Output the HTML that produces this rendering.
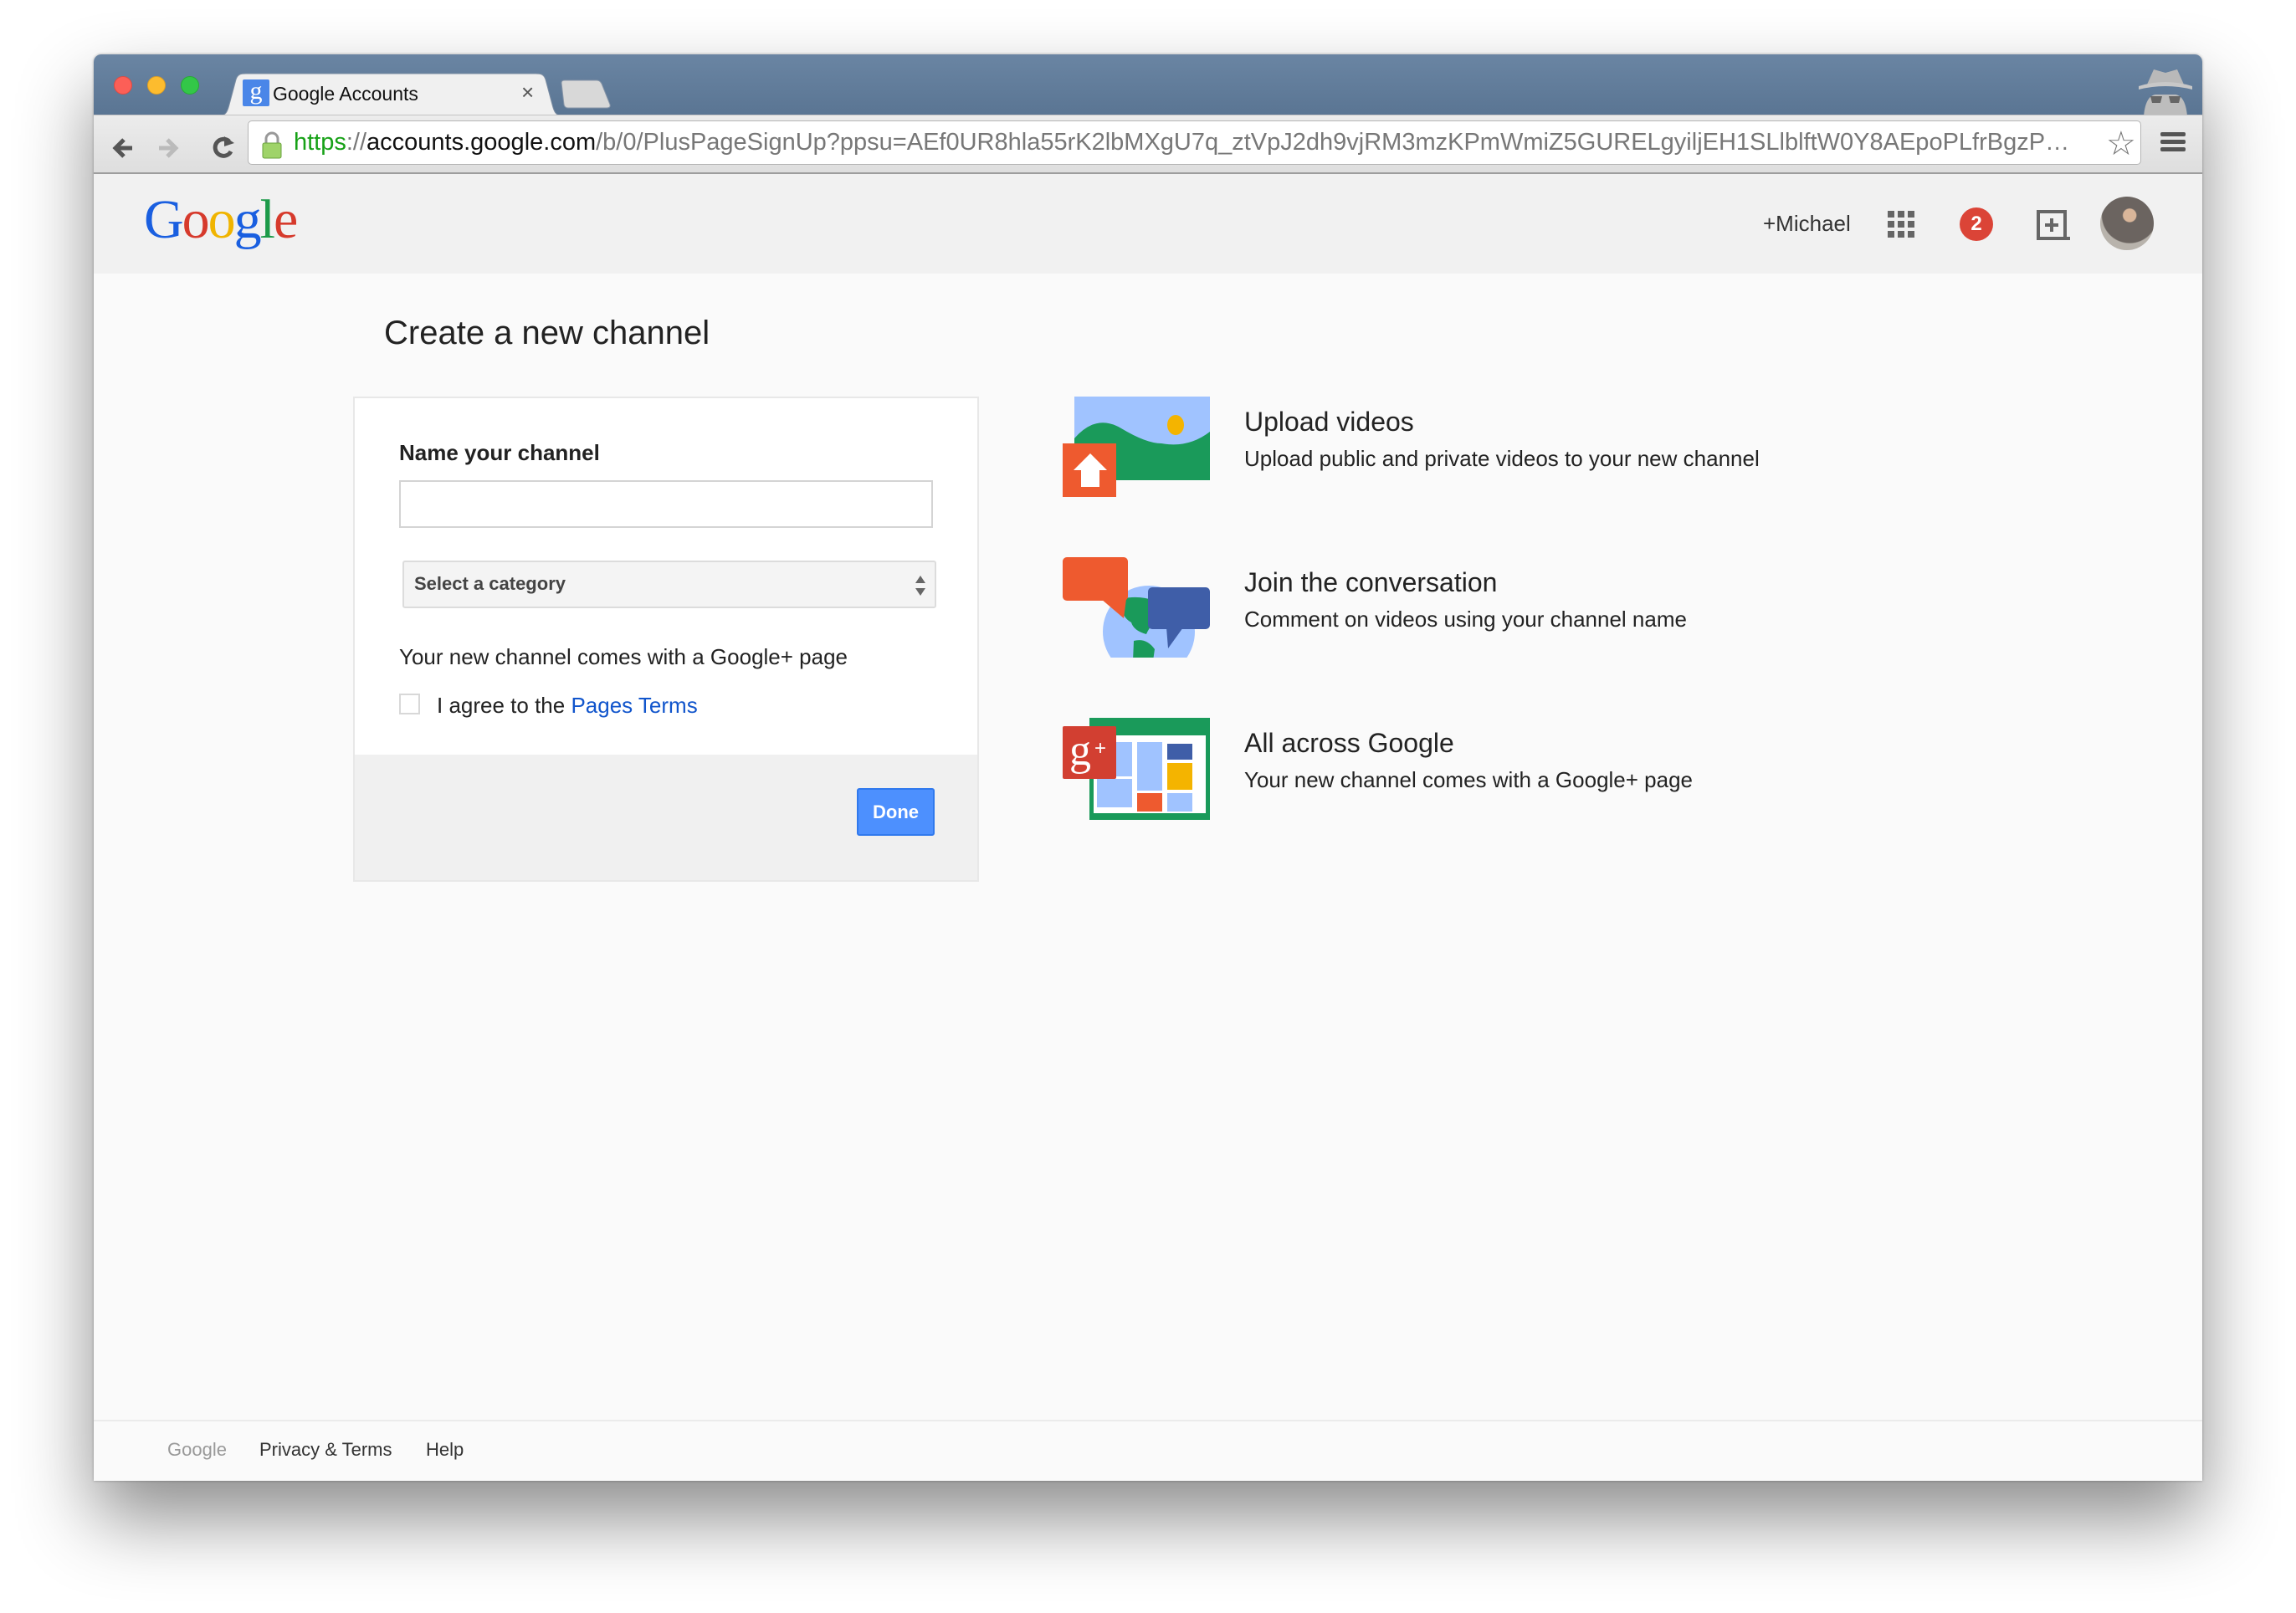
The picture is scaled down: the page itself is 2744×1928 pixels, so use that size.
<!DOCTYPE html>
<html><head><meta charset="utf-8">
<style>
*{margin:0;padding:0;box-sizing:border-box}
body{width:2744px;height:1928px;background:#fff;position:relative;overflow:hidden;font-family:"Liberation Sans",Arial,sans-serif;color:#222}
.a{position:absolute}
#win{left:112px;top:65px;width:2520px;height:1705px;border-radius:9px 9px 0 0;overflow:hidden;background:#fafafa;box-shadow:0 45px 90px rgba(0,0,0,.45),0 0 3px rgba(0,0,0,.3)}
.t{white-space:nowrap}
</style></head><body>
<div id="win" class="a">
  <div class="a" style="left:0;top:0;width:2520px;height:72px;background:linear-gradient(#6a85a3,#5a7593)"></div>
  <div class="a" style="left:24px;top:26px;width:22px;height:22px;border-radius:50%;background:#fc5f57;border:1px solid #de4a42"></div>
  <div class="a" style="left:64px;top:26px;width:22px;height:22px;border-radius:50%;background:#fdbc2e;border:1px solid #de9f23"></div>
  <div class="a" style="left:104px;top:26px;width:22px;height:22px;border-radius:50%;background:#33c748;border:1px solid #27aa35"></div>
  <svg class="a" style="left:140px;top:22px" width="440" height="52"><path d="M8 52 C18 52 20 46 22 38 L30 8 C32 2 35 1 42 1 L388 1 C395 1 398 2 400 8 L408 38 C410 46 412 52 422 52 Z" fill="#f0f0f0" stroke="#7d8ea3"/></svg>
  <div class="a" style="left:178px;top:30px;width:32px;height:32px;background:#4a86e8;border-radius:2px;color:#fff;font:30px 'Liberation Serif',serif;text-align:center;line-height:28px">g</div>
  <div class="a t" style="left:214px;top:34px;font-size:23px;color:#111">Google Accounts</div>
  <div class="a" style="left:511px;top:30px;font-size:26px;color:#555">×</div>
  <svg class="a" style="left:555px;top:30px" width="66" height="36"><path d="M4 4 Q4 1 8 1 L46 1 Q50 1 52 5 L62 30 Q63 34 58 34 L12 34 Q8 34 7 30 Z" fill="#d8d8d8" stroke="#8896a8"/></svg>
  <svg class="a" style="left:2440px;top:14px" width="72" height="60"><path d="M14 22 L22 4 L36 8 L50 4 L58 22 Z" fill="#b9b9b9"/><path d="M4 24 Q36 14 68 24 L68 28 Q36 20 4 28Z" fill="#c8c8c8"/><path d="M10 60 Q12 36 24 34 L48 34 Q60 36 62 60Z" fill="#bdbdbd"/><path d="M18 36 h14 l-2 8 h-10z M40 36 h14 l-2 8 h-10z" fill="#666"/></svg>
  <div class="a" style="left:0;top:72px;width:2520px;height:71px;background:linear-gradient(#ececec,#dedede);border-bottom:2px solid #9d9d9d;border-top:1px solid #c4c4c4"></div>
  <svg class="a" style="left:20px;top:92px" width="200" height="40"><path d="M26 20 H6 M16 10 L6 20 L16 30" stroke="#555" stroke-width="5" fill="none"/><path d="M58 20 H78 M68 10 L78 20 L68 30" stroke="#bbb" stroke-width="5" fill="none"/><path d="M142 12 A10 10 0 1 0 144 24" stroke="#555" stroke-width="5" fill="none"/><path d="M136 6 L148 14 L136 18 Z" fill="#555"/></svg>
  <div class="a" style="left:184px;top:79px;width:2263px;height:53px;background:#fff;border:1px solid #b5b5b5;border-radius:5px"></div>
  <svg class="a" style="left:200px;top:92px" width="26" height="34"><path d="M6 14 V9 A7 7 0 0 1 20 9 V14" stroke="#999" stroke-width="3" fill="none"/><rect x="2" y="14" width="22" height="18" rx="2" fill="#9fd369" stroke="#6aa33d"/></svg>
  <div class="a t" style="left:239px;top:89px;width:2138px;overflow:hidden;text-overflow:ellipsis;font-size:29px;color:#777"><span style="color:#17a117">https</span>://<span style="color:#111">accounts.google.com</span>/b/0/PlusPageSignUp?ppsu=AEf0UR8hla55rK2lbMXgU7q_ztVpJ2dh9vjRM3mzKPmWmiZ5GURELgyiljEH1SLlblftW0Y8AEpoPLfrBgzPPjhAbCdEfGhIjK</div>
  <div class="a" style="left:2405px;top:84px;font-size:40px;color:#777">☆</div>
  <div class="a" style="left:2470px;top:93px;width:30px;height:5px;background:#555;border-radius:2px;box-shadow:0 9px 0 #555,0 18px 0 #555"></div>
  <div class="a" style="left:0;top:143px;width:2520px;height:119px;background:#f1f1f1"></div>
  <div class="a t" style="left:60px;top:160px;font:66px 'Liberation Serif',serif;letter-spacing:-2px"><span style="color:#1a5fe0">G</span><span style="color:#d63a2c">o</span><span style="color:#f0b400">o</span><span style="color:#1a5fe0">g</span><span style="color:#1c9a49">l</span><span style="color:#d63a2c">e</span></div>
  <div class="a t" style="left:1995px;top:187px;font-size:26px;color:#333">+Michael</div>
  <svg class="a" style="left:2144px;top:187px" width="32" height="32"><g fill="#666"><rect x="0" y="0" width="8" height="8"/><rect x="12" y="0" width="8" height="8"/><rect x="24" y="0" width="8" height="8"/><rect x="0" y="12" width="8" height="8"/><rect x="12" y="12" width="8" height="8"/><rect x="24" y="12" width="8" height="8"/><rect x="0" y="24" width="8" height="8"/><rect x="12" y="24" width="8" height="8"/><rect x="24" y="24" width="8" height="8"/></g></svg>
  <div class="a" style="left:2230px;top:183px;width:40px;height:40px;border-radius:50%;background:#db4437;color:#fff;font-weight:bold;font-size:24px;text-align:center;line-height:40px">2</div>
  <svg class="a" style="left:2322px;top:186px" width="42" height="36"><path d="M2 2 H34 V34 H2 Z" stroke="#666" stroke-width="4" fill="none"/><path d="M34 34 L40 34" stroke="#666" stroke-width="4"/><path d="M18 10 V26 M10 18 H26" stroke="#666" stroke-width="4"/></svg>
  <div class="a" style="left:2398px;top:170px;width:64px;height:64px;border-radius:50%;background:radial-gradient(circle at 55% 35%,#d9b69a 0 14%,#6b6460 16% 60%,#b8b3ac 62%)"></div>
  <div class="a t" style="left:347px;top:311px;font-size:40px;color:#222">Create a new channel</div>
  <div class="a" style="left:310px;top:409px;width:748px;height:580px;background:#fff;border:2px solid #e8e8e8"></div>
  <div class="a" style="left:312px;top:837px;width:744px;height:150px;background:#f0f0f0"></div>
  <div class="a t" style="left:365px;top:461px;font-size:26px;font-weight:bold;color:#222">Name your channel</div>
  <div class="a" style="left:365px;top:509px;width:638px;height:57px;border:2px solid #d4d4d4;background:#fff"></div>
  <div class="a" style="left:369px;top:605px;width:638px;height:57px;border:2px solid #dcdcdc;border-radius:3px;background:#f4f4f4"></div>
  <div class="a t" style="left:383px;top:620px;font-size:22px;font-weight:bold;color:#444">Select a category</div>
  <svg class="a" style="left:980px;top:622px" width="16" height="26"><path d="M8 1 L14 10 H2Z M8 25 L14 16 H2Z" fill="#666"/></svg>
  <div class="a t" style="left:365px;top:705px;font-size:26px;color:#222">Your new channel comes with a Google+ page</div>
  <div class="a" style="left:365px;top:764px;width:25px;height:25px;border:2px solid #d8d8d8;background:#fff"></div>
  <div class="a t" style="left:410px;top:763px;font-size:26px;color:#222">I agree to the <span style="color:#1155cc">Pages Terms</span></div>
  <div class="a" style="left:912px;top:877px;width:93px;height:57px;background:#4d90fe;border:2px solid #3079ed;border-radius:3px;color:#fff;font-weight:bold;font-size:22px;text-align:center;line-height:53px">Done</div>

  <svg class="a" style="left:1158px;top:409px" width="176" height="120"><rect x="14" y="0" width="162" height="100" fill="#a0c3ff"/><path d="M14 50 Q40 20 70 38 T118 56 Q150 62 176 42 V100 H14Z" fill="#1a9a5a"/><ellipse cx="135" cy="34" rx="10" ry="12" fill="#f4b400"/><rect x="0" y="56" width="64" height="64" fill="#ee5a2f"/><path d="M33 68 L53 88 H44 V108 H22 V88 H13Z" fill="#fff"/></svg>
  <div class="a t" style="left:1375px;top:421px;font-size:32px;color:#222">Upload videos</div>
  <div class="a t" style="left:1375px;top:468px;font-size:26px;color:#222">Upload public and private videos to your new channel</div>
  <svg class="a" style="left:1158px;top:601px" width="176" height="120"><defs><clipPath id="c1"><rect x="0" y="0" width="176" height="120"/></clipPath></defs><g clip-path="url(#c1)"><circle cx="103" cy="89" r="55" fill="#a0c3ff"/><path d="M70 50 Q90 45 110 52 L118 70 Q105 80 100 92 Q85 88 82 78 Q68 70 70 50Z M85 100 Q100 96 110 110 L108 124 L84 124Z" fill="#1a9a5a"/></g><rect x="0" y="0" width="78" height="52" rx="5" fill="#ee5a2f"/><path d="M46 50 L76 50 L73 73Z" fill="#ee5a2f"/><rect x="102" y="36" width="74" height="50" rx="5" fill="#3f5ea8"/><path d="M124 84 L144 84 L126 109Z" fill="#3f5ea8"/></svg>
  <div class="a t" style="left:1375px;top:613px;font-size:32px;color:#222">Join the conversation</div>
  <div class="a t" style="left:1375px;top:660px;font-size:26px;color:#222">Comment on videos using your channel name</div>
  <svg class="a" style="left:1158px;top:793px" width="176" height="122"><rect x="32" y="0" width="144" height="122" fill="#1a9a5a"/><rect x="37" y="21" width="134" height="93" fill="#fff"/><rect x="41" y="29" width="42" height="41" fill="#a0c3ff"/><rect x="41" y="73" width="42" height="34" fill="#a0c3ff"/><rect x="89" y="29" width="30" height="58" fill="#a0c3ff"/><rect x="89" y="90" width="30" height="22" fill="#ee5a2f"/><rect x="125" y="31" width="30" height="19" fill="#3f5ea8"/><rect x="125" y="54" width="30" height="32" fill="#f4b400"/><rect x="125" y="90" width="30" height="22" fill="#a0c3ff"/><rect x="0" y="10" width="64" height="63" rx="2" fill="#d23f31"/><text x="8" y="56" font-family="Liberation Serif,serif" font-size="52" fill="#fff">g</text><text x="38" y="44" font-family="Liberation Sans,sans-serif" font-size="24" fill="#fff">+</text></svg>
  <div class="a t" style="left:1375px;top:805px;font-size:32px;color:#222">All across Google</div>
  <div class="a t" style="left:1375px;top:852px;font-size:26px;color:#222">Your new channel comes with a Google+ page</div>

  <div class="a" style="left:0;top:1632px;width:2520px;height:2px;background:#ebebeb"></div>
  <div class="a t" style="left:88px;top:1655px;font-size:22px;color:#999">Google</div>
  <div class="a t" style="left:198px;top:1655px;font-size:22px;color:#333">Privacy &amp; Terms</div>
  <div class="a t" style="left:397px;top:1655px;font-size:22px;color:#333">Help</div>
</div>
</body></html>
